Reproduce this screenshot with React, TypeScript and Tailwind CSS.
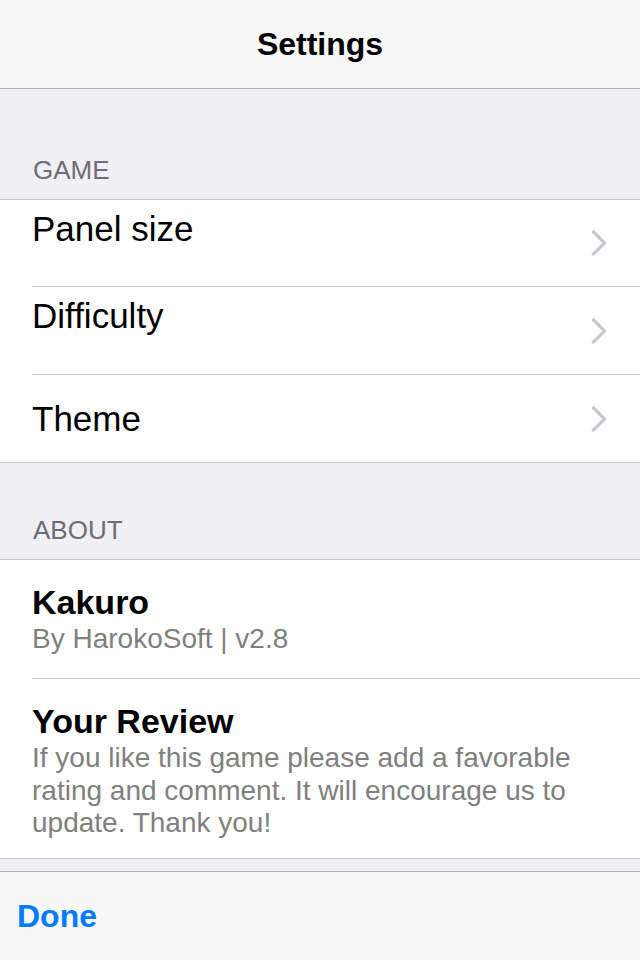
import React from 'react';

const font = { fontFamily: '"Liberation Sans", Arial, sans-serif' };

const Chevron: React.FC = () => (
  <svg width="16" height="26" viewBox="0 0 16 26" className="shrink-0">
    <path d="M2.5 2 L13.5 13 L2.5 24" fill="none" stroke="#c7c7cc" strokeWidth="3.2" strokeLinecap="square" />
  </svg>
);

type RowProps = { label: string; height: string; top?: boolean; last?: boolean };

const NavRow: React.FC<RowProps> = ({ label, height, top, last }) => (
  <div className={`relative flex ${height} ${top ? 'items-start pt-[11px]' : 'items-center'} pl-[32px] pr-[33px] bg-white`}>
    <span className="flex-1 text-[35px] leading-none text-black">{label}</span>
    <div className="absolute right-[33px] top-0 bottom-0 flex items-center">
      <Chevron />
    </div>
    {!last && <div className="absolute left-[32px] right-0 bottom-[-1px] h-px bg-[#c8c7cc]" />}
  </div>
);

const SectionHeader: React.FC<{ title: string; height: string }> = ({ title, height }) => (
  <div className={`${height} flex items-end pl-[33px] pb-[16px] border-b border-[#c8c7cc]`}>
    <span className="text-[26px] leading-none text-[#6d6d72]">{title}</span>
  </div>
);

const App: React.FC = () => {
  return (
    <div className="flex flex-col h-[960px] w-[640px] bg-[#efeff4] overflow-hidden" style={font}>
      {/* Nav bar */}
      <header className="h-[89px] shrink-0 flex items-center justify-center bg-[#f7f7f7] border-b border-[#b2b2b2]">
        <h1 className="text-[32px] leading-none font-bold text-black">Settings</h1>
      </header>

      {/* Table */}
      <main className="flex-1 flex flex-col">
        <SectionHeader title="GAME" height="h-[111px]" />
        <div className="flex flex-col gap-px bg-white">
          <NavRow label="Panel size" height="h-[86px]" top />
          <NavRow label="Difficulty" height="h-[87px]" top />
          <NavRow label="Theme" height="h-[87px]" last />
        </div>
        <div className="border-t border-[#c8c7cc]" />
        <SectionHeader title="ABOUT" height="h-[97px]" />

        <div className="bg-white">
          <div className="relative h-[118px] pl-[32px] pt-[25px]">
            <div className="text-[34px] leading-none font-bold text-black">Kakuro</div>
            <div className="mt-[6px] text-[28px] leading-none text-[#7f7f7f]">By HarokoSoft | v2.8</div>
            <div className="absolute left-[32px] right-0 bottom-[-1px] h-px bg-[#c8c7cc]" />
          </div>
          <div className="h-px" />
          <div className="h-[179px] pl-[32px] pr-[40px] pt-[25px]">
            <div className="text-[34px] leading-none font-bold text-black">Your Review</div>
            <p className="mt-[4px] text-[28px] leading-[32.5px] text-[#7f7f7f]">
              If you like this game please add a favorable rating and comment. It will encourage us to update. Thank you!
            </p>
          </div>
        </div>
        <div className="border-t border-[#c8c7cc]" />
      </main>

      {/* Toolbar */}
      <footer className="h-[89px] shrink-0 flex items-center pl-[17px] bg-[#f7f7f7] border-t border-[#b2b2b2]">
        <button className="text-[32px] leading-none font-bold text-[#007aff]">Done</button>
      </footer>
    </div>
  );
};

export default App;
